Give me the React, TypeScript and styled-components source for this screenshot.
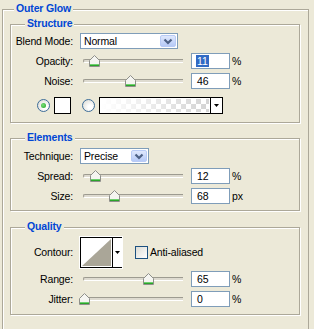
import React from 'react';
import styled, { createGlobalStyle } from 'styled-components';

const GlobalStyle = createGlobalStyle`
  html, body {
    margin: 0;
    padding: 0;
    background: #ece9d8;
    overflow: hidden;
  }
  body {
    font-family: "Liberation Sans", Arial, sans-serif;
    font-size: 10.5px;
    letter-spacing: -0.15px;
    color: #000;
  }
`;

const Panel = styled.div`
  position: relative;
  box-sizing: border-box;
  width: 307px;
  margin: 9px 0 0 2px;
  padding: 14px 8px 14px 7px;
  border: 1px solid #aca899;
  border-bottom: none;
  box-shadow: inset 1px 1px 0 #fff;
`;

const Group = styled.div<{ $pt: number; $pb: number; $mt?: number }>`
  position: relative;
  border: 1px solid #aca899;
  box-shadow: inset 1px 1px 0 #fff, 1px 1px 0 #fff;
  padding: ${p => p.$pt}px 0 ${p => p.$pb}px 0;
  margin-top: ${p => p.$mt ?? 0}px;
`;

const Legend = styled.div<{ $left: number }>`
  position: absolute;
  top: -8px;
  left: ${p => p.$left}px;
  padding: 0 2px;
  line-height: 13px;
  background: #ece9d8;
  color: #0046d5;
  font-weight: bold;
  font-size: 10.5px;
`;

const Row = styled.div<{ $h?: number; $mt?: number; $indent?: number }>`
  display: flex;
  align-items: center;
  height: ${p => p.$h ?? 20}px;
  margin-top: ${p => p.$mt ?? 0}px;
  padding-left: ${p => p.$indent ?? 0}px;
`;

const Label = styled.span`
  flex: none;
  width: 62px;
  margin-right: 7px;
  text-align: right;
  white-space: nowrap;
`;

const Combo = styled.div<{ $w: number }>`
  flex: none;
  display: flex;
  align-items: center;
  box-sizing: border-box;
  width: ${p => p.$w}px;
  height: 16px;
  padding: 1px;
  border: 1px solid #7f9db9;
  background: #fff;
`;

const ComboText = styled.span`
  flex: 1;
  padding-left: 2px;
  line-height: 12px;
`;

const ComboButton = styled.div`
  display: flex;
  align-items: center;
  justify-content: center;
  box-sizing: border-box;
  width: 16px;
  height: 12px;
  border: 1px solid #b8cbf6;
  border-radius: 2px;
  background: linear-gradient(#dfe8fd, #b6caf7);
`;

const Slider = styled.div`
  position: relative;
  flex: none;
  width: 100px;
  height: 20px;
  margin: 0 8px 0 3px;
`;

const Track = styled.div`
  position: absolute;
  top: 8px;
  left: 0;
  right: 0;
  height: 2px;
  border-top: 1px solid #9d9b90;
  border-bottom: 1px solid #fff;
  border-left: 1px solid #9d9b90;
  border-radius: 2px 0 0 2px;
  background: #dedbd0;
`;

const Thumb = styled.div<{ $x: number }>`
  position: absolute;
  top: 4px;
  left: ${p => p.$x}px;
  width: 11px;
  height: 12px;
  line-height: 0;
`;

const NumBox = styled.div`
  flex: none;
  box-sizing: border-box;
  width: 39px;
  height: 16px;
  padding-left: 5px;
  border: 1px solid #7f9db9;
  background: #fff;
  line-height: 14px;
`;

const Selected = styled.span`
  background: #316ac5;
  color: #fff;
  padding: 0 1px;
  margin-left: -1px;
`;

const Unit = styled.span`
  margin-left: 2px;
`;

const Radio = styled.div<{ $on?: boolean }>`
  position: relative;
  flex: none;
  box-sizing: border-box;
  width: 13px;
  height: 13px;
  border: 1px solid #3d6d99;
  border-radius: 50%;
  background: radial-gradient(circle at 65% 65%, #fff 20%, #d6d5cd 100%);

  &::after {
    content: '';
    display: ${p => (p.$on ? 'block' : 'none')};
    position: absolute;
    left: 3px;
    top: 3px;
    width: 5px;
    height: 5px;
    border-radius: 50%;
    background: radial-gradient(circle at 40% 40%, #7be07b, #21a121);
  }
`;

const Swatch = styled.div`
  flex: none;
  box-sizing: border-box;
  width: 17px;
  height: 17px;
  margin: 0 11px 0 4px;
  border: 1px solid #000;
  background: #fff;
`;

const GradientPicker = styled.div`
  flex: none;
  display: flex;
  box-sizing: border-box;
  width: 124px;
  height: 17px;
  margin-left: 4px;
  border: 1px solid #000;
  background: #fff;
`;

const GradientStrip = styled.div`
  flex: 1;
  margin: 1px;
  background-color: #fff;
  background-image:
    linear-gradient(to right, #fff 0%, rgba(255, 255, 255, 0) 100%),
    linear-gradient(45deg, #d4d4d4 25%, transparent 25%, transparent 75%, #d4d4d4 75%),
    linear-gradient(45deg, #d4d4d4 25%, transparent 25%, transparent 75%, #d4d4d4 75%);
  background-size: 100% 100%, 10px 10px, 10px 10px;
  background-position: 0 0, 0 0, 5px 5px;
`;

const ArrowCell = styled.div<{ $w: number }>`
  flex: none;
  display: flex;
  align-items: center;
  justify-content: center;
  width: ${p => p.$w}px;
  border-left: 1px solid #000;
  background: #fff;
`;

const ContourPicker = styled.div`
  flex: none;
  display: flex;
  box-sizing: border-box;
  width: 42px;
  height: 31px;
  border: 1px solid #000;
  box-shadow: 0 0 0 1px #fff;
  background: #fff;
`;

const ContourPreview = styled.div`
  flex: 1;
  padding: 1px;
  line-height: 0;
`;

const Check = styled.div`
  flex: none;
  box-sizing: border-box;
  width: 13px;
  height: 13px;
  margin: 0 2px 0 13px;
  border: 1px solid #1c5180;
  background: linear-gradient(135deg, #dcdcd5, #fff);
`;

const DownArrow = () => (
  <svg width="5" height="3" viewBox="0 0 5 3">
    <path d="M0 0H5L2.5 3Z" fill="#000" />
  </svg>
);

const Chevron = () => (
  <svg width="10" height="7" viewBox="0 0 10 7">
    <path d="M1.5 1.5L5 5L8.5 1.5" fill="none" stroke="#4d6185" strokeWidth="2.2" />
  </svg>
);

const ThumbIcon = () => (
  <svg width="11" height="12" viewBox="0 0 11 12">
    <path d="M5.5 0.5L10.5 5.5V11.5H0.5V5.5Z" fill="#f5f5f1" stroke="#8e8f8a" />
    <rect x="1" y="9" width="9" height="2" fill="#2aa52a" />
    <rect x="1" y="9" width="9" height="1" fill="#6fcf6f" />
  </svg>
);

type SliderRowProps = {
  label: string;
  x: number;
  value: React.ReactNode;
  unit: string;
  mt?: number;
};

const SliderRow: React.FC<SliderRowProps> = ({ label, x, value, unit, mt }) => (
  <Row $mt={mt}>
    <Label>{label}</Label>
    <Slider>
      <Track />
      <Thumb $x={x}>
        <ThumbIcon />
      </Thumb>
    </Slider>
    <NumBox>{value}</NumBox>
    <Unit>{unit}</Unit>
  </Row>
);

const App: React.FC = () => {
  return (
    <>
      <GlobalStyle />
      <Panel>
        <Legend $left={11}>Outer Glow</Legend>

        <Group $pt={6} $pb={7}>
          <Legend $left={14}>Structure</Legend>
          <Row>
            <Label>Blend Mode:</Label>
            <Combo $w={98}>
              <ComboText>Normal</ComboText>
              <ComboButton>
                <Chevron />
              </ComboButton>
            </Combo>
          </Row>
          <SliderRow label="Opacity:" x={6} value={<Selected>11</Selected>} unit="%" />
          <SliderRow label="Noise:" x={42} value="46" unit="%" />
          <Row $mt={4} $indent={26}>
            <Radio $on />
            <Swatch />
            <Radio />
            <GradientPicker>
              <GradientStrip />
              <ArrowCell $w={11}>
                <DownArrow />
              </ArrowCell>
            </GradientPicker>
          </Row>
        </Group>

        <Group $pt={7} $pb={4} $mt={15}>
          <Legend $left={14}>Elements</Legend>
          <Row>
            <Label>Technique:</Label>
            <Combo $w={69}>
              <ComboText>Precise</ComboText>
              <ComboButton>
                <Chevron />
              </ComboButton>
            </Combo>
          </Row>
          <SliderRow label="Spread:" x={7} value="12" unit="%" />
          <SliderRow label="Size:" x={26} value="68" unit="px" />
        </Group>

        <Group $pt={8} $pb={5} $mt={16}>
          <Legend $left={14}>Quality</Legend>
          <Row $h={32}>
            <Label>Contour:</Label>
            <ContourPicker>
              <ContourPreview>
                <svg width="29" height="27" viewBox="0 0 29 27">
                  <path d="M0 27L29 0V27Z" fill="#aaa698" />
                </svg>
              </ContourPreview>
              <ArrowCell $w={9}>
                <DownArrow />
              </ArrowCell>
            </ContourPicker>
            <Check />
            <span>Anti-aliased</span>
          </Row>
          <SliderRow label="Range:" x={60} value="65" unit="%" mt={1} />
          <SliderRow label="Jitter:" x={-4} value="0" unit="%" />
        </Group>
      </Panel>
    </>
  );
};

export default App;
